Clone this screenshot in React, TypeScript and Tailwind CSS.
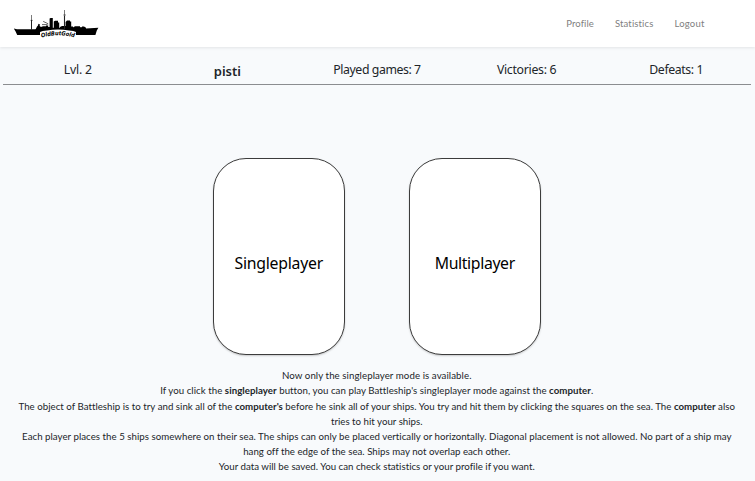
import type { ReactNode } from 'react';

function ShipLogo() {
  return (
    <svg className="mt-px h-8 w-[88px]" viewBox="12 8 88 32" aria-label="OldButGold">
      <g fill="#000">
        <path d="M13.8 28.6 L17 29.2 H35 L38 28.4 L42 27.8 H84 L86 28.4 L98.4 27.8 L96.8 30.5 L95.4 35 H17.2 L15.6 31.6 Z" />
        <path d="M35.8 29 L37 26.6 L38 25.6 L38.4 23.8 L40 24.4 L39.6 26 L41 27 L43 26.2 H46 V25.6 H48.2 V27 H49.6 V18.6 L50.6 18 H52.8 V29 Z" />
        <path d="M53.8 21.4 L55 20.8 H58 V22.4 H59.2 V29 H53.8 Z" />
        <path d="M60 27 L62 26 H65.6 V22 L67 20.6 H70 V21.6 H71.2 V26.4 H73 V29 H60 Z" />
        <path d="M73 27.4 L75 26.3 H80 V27.2 H82 V26.6 H84 L86 27.8 V29 H73 Z" />
      </g>
      <g stroke="#222" fill="none">
        <path d="M31.5 15 V30" strokeWidth=".6" />
        <path d="M31.5 20 V30" strokeWidth="1" />
        <path d="M64.5 10 V29" strokeWidth=".6" />
        <path d="M64.5 16 V29" strokeWidth="1.1" />
        <path d="M43.2 21.4 L48.2 23.8 M42 24.6 H47.6 M30.6 20.4 H32.6 M63.4 15 H65.8" strokeWidth=".7" />
      </g>
      <path d="M40 32 Q42 30.6 47 30.4 Q58 28.4 69 30.4 Q74 30.8 76 32 V39 H40 Z" fill="#fff" />
      <path id="banner-arc" d="M41.4 37.6 Q58 33 75.2 37.6" fill="none" />
      <text className="font-['DejaVu_Sans',sans-serif] text-[5.8px] font-bold italic" fill="#000">
        <textPath href="#banner-arc" textLength="33.4" lengthAdjust="spacingAndGlyphs">OldButGold</textPath>
      </text>
    </svg>
  );
}

function ModeCard({ children }: { children: ReactNode }) {
  return (
    <button className="flex h-[197px] w-[132px] items-center justify-center rounded-[33px] border border-[#3c3c3c] bg-white pt-[15px] font-['Noto_Sans',sans-serif] text-[15.8px] text-black shadow-[0_1px_2px_rgba(0,0,0,0.2)]">
      {children}
    </button>
  );
}

export default function App() {
  return (
    <div className="min-h-[481px] bg-[#f8fafc] font-['Lato','Noto_Sans',sans-serif] text-[#212529]">
      <nav className="flex h-[47px] items-center justify-between bg-white pl-3 pr-[50.5px] shadow-[0_1px_3px_rgba(0,0,0,0.09)]">
        <ShipLogo />
        <div className="flex gap-[21px] pt-0.5 text-[9.5px] text-[#808080]">
          <a className="tracking-[0.1px]">Profile</a>
          <a className="tracking-[0.14px]">Statistics</a>
          <a className="tracking-[0.2px]">Logout</a>
        </div>
      </nav>

      <section className="ml-[3px] mr-1 grid h-[38px] grid-cols-5 border-b border-[#8b8d90] pt-[14px] text-center font-['Noto_Sans',sans-serif] text-[12.3px] leading-[18px]">
        <div className="tracking-[-0.2px]">Lvl. 2</div>
        <div className="pt-px text-[13px] font-semibold">pisti</div>
        <div className="tracking-[-0.43px]">Played games: 7</div>
        <div className="tracking-[-0.3px]">Victories: 6</div>
        <div className="tracking-[-0.4px]">Defeats: 1</div>
      </section>

      <section className="mt-[73px] flex justify-center gap-[64px] pr-[1.5px]">
        <ModeCard><span className="tracking-[-0.25px]">Singleplayer</span></ModeCard>
        <ModeCard><span className="tracking-[-0.36px]">Multiplayer</span></ModeCard>
      </section>

      <section className="mt-[13.4px] whitespace-nowrap pr-[1.5px] text-center text-[9.7px] leading-[15.1px]">
        <p className="tracking-[0.07px]">Now only the singleplayer mode is available.</p>
        <p className="tracking-[0.04px]">If you click the <b>singleplayer</b> button, you can play Battleship's singleplayer mode against the <b>computer</b>.</p>
        <p className="tracking-[0.02px]">The object of Battleship is to try and sink all of the <b>computer's</b> before he sink all of your ships. You try and hit them by clicking the squares on the sea. The <b>computer</b> also</p>
        <p className="tracking-[0.01px]">tries to hit your ships.</p>
        <p className="tracking-[0.03px]">Each player places the 5 ships somewhere on their sea. The ships can only be placed vertically or horizontally. Diagonal placement is not allowed. No part of a ship may</p>
        <p className="tracking-[0.01px]">hang off the edge of the sea. Ships may not overlap each other.</p>
        <p className="tracking-[0.01px]">Your data will be saved. You can check statistics or your profile if you want.</p>
      </section>
    </div>
  );
}
